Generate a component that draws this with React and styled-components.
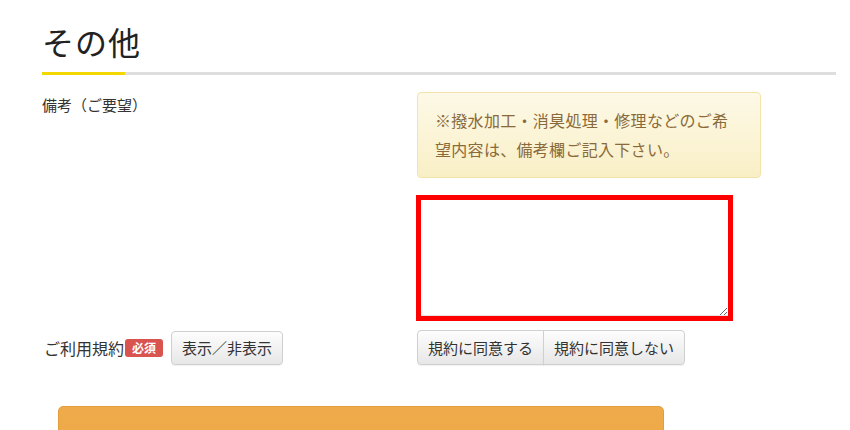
import styled, { createGlobalStyle } from "styled-components";

const GlobalStyle = createGlobalStyle`
  html, body {
    margin: 0;
    padding: 0;
    background: #fff;
  }
  body {
    font-family: "Noto Sans CJK JP", "Noto Sans", sans-serif;
    color: #333;
  }
`;

const Page = styled.div`
  width: 850px;
  height: 430px;
  overflow: hidden;
  box-sizing: border-box;
  padding: 19px 14px 0 42px;
`;

const Heading = styled.h2`
  margin: 0;
  font-size: 32px;
  line-height: 45px;
  font-weight: 400;
  color: #222;
  letter-spacing: 1px;
`;

const Rule = styled.div`
  margin-top: 8px;
  height: 3px;
  background: linear-gradient(to right, #f4d600 83px, #dedede 83px);
`;

const Row = styled.div`
  display: grid;
  grid-template-columns: 375px 1fr;
  margin-top: ${(p) => p.$gap || 0}px;
`;

const Label = styled.div`
  font-size: 15px;
  line-height: 26px;
  color: #333;
  white-space: nowrap;
`;

const LabelLine = styled.div`
  display: flex;
  align-items: center;
  gap: 8px;
  padding-left: 2px;
`;

const LabelText = styled.span`
  display: flex;
  align-items: center;
  font-size: 16px;
  color: #333;
`;

const Badge = styled.span`
  display: inline-block;
  background: #d9534f;
  color: #fff;
  font-size: 12px;
  font-weight: 700;
  line-height: 18px;
  padding: 0 7px;
  border-radius: 3px;
  margin-left: 1px;
`;

const Field = styled.div`
  display: flex;
  flex-direction: column;
  align-items: flex-start;
  gap: 18px;
`;

const Notice = styled.div`
  box-sizing: border-box;
  width: 344px;
  padding: 13px 28px 13px 17px;
  border: 1px solid #f3e3a8;
  border-radius: 4px;
  background: linear-gradient(to bottom, #fdf9e7, #f9efc6);
  color: #8a6a3a;
  font-size: 16px;
  line-height: 29px;
  letter-spacing: 0.3px;
`;

const Memo = styled.textarea`
  box-sizing: border-box;
  width: 317px;
  height: 126px;
  margin: -1px 0 0 -1px;
  border: 5px solid #ff0000;
  border-radius: 0;
  box-shadow: inset 0 -1px 1px rgba(0, 0, 0, 0.12);
  outline: none;
  font-family: inherit;
  font-size: 15px;
`;

const BtnGroup = styled.div`
  display: flex;
`;

const Button = styled.button`
  box-sizing: border-box;
  height: ${(p) => p.$height || 35}px;
  padding: 0 ${(p) => p.$pad || 11}px;
  font-family: inherit;
  font-size: 15px;
  color: #333;
  background: linear-gradient(to bottom, #fdfdfd, #e7e7e7);
  border: 1px solid #d0d0d0;
  border-radius: ${(p) => p.$radius || "4px"};
  box-shadow: 0 1px 1px rgba(0, 0, 0, 0.06);
  cursor: pointer;
  white-space: nowrap;

  & + & {
    margin-left: -1px;
  }
`;

const Submit = styled.button`
  display: block;
  box-sizing: border-box;
  width: 606px;
  height: 56px;
  margin: 41px 0 0 16px;
  background: linear-gradient(to bottom, #efab4b, #eea845);
  border: 1px solid #e39d3a;
  border-radius: 5px;
  cursor: pointer;
`;

export default function App() {
  return (
    <>
      <GlobalStyle />
      <Page>
        <Heading>その他</Heading>
        <Rule />

        <Row $gap={17}>
          <Label>備考（ご要望）</Label>
          <Field>
            <Notice>
              ※撥水加工・消臭処理・修理などのご希望内容は、備考欄ご記入下さい。
            </Notice>
            <Memo />
          </Field>
        </Row>

        <Row $gap={9}>
          <LabelLine>
            <LabelText>
              ご利用規約<Badge>必須</Badge>
            </LabelText>
            <Button $height={34} $pad={10}>表示／非表示</Button>
          </LabelLine>
          <BtnGroup>
            <Button $pad={10} $radius="4px 0 0 4px">規約に同意する</Button>
            <Button $pad={10} $radius="0 4px 4px 0">規約に同意しない</Button>
          </BtnGroup>
        </Row>

        <Submit />
      </Page>
    </>
  );
}
